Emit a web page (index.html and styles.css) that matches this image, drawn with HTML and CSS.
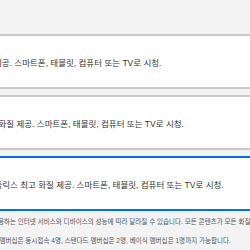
FILE: index.html
```html
<!DOCTYPE html>
<html lang="ko">
<head>
  <meta charset="UTF-8" />
  <meta name="viewport" content="width=device-width, initial-scale=1.0"/>
  <title>멤버십 선택</title>
  <link rel="stylesheet" href="styles.css">
</head>
<body>
  <main class="plan-form">
    <div class="plan-list">
      <label class="plan">
        <span class="plan-desc">좋은 화질 제공. 스마트폰, 태블릿, 컴퓨터 또는 TV로 시청.</span>
      </label>
      <label class="plan">
        <span class="plan-desc">최대 풀HD 화질 제공. 스마트폰, 태블릿, 컴퓨터 또는 TV로 시청.</span>
      </label>
      <label class="plan selected">
        <span class="plan-desc">UHD와 넷플릭스 최고 화질 제공. 스마트폰, 태블릿, 컴퓨터 또는 TV로 시청.</span>
      </label>
    </div>

    <p class="note">UHD 화질은 사용하는 인터넷 서비스와 디바이스의 성능에 따라 달라질 수 있습니다. 모든 콘텐츠가 모든 화질로 제공되지는 않습니다.</p>
    <p class="note">참고 : 프리미엄 멤버십은 동시접속 4명, 스탠다드 멤버십은 2명, 베이식 멤버십은 1명까지 가능합니다.</p>
  </main>
</body>
</html>
```

FILE: styles.css
```css
:root {
  --bg: #f3f3f3;
  --card: #fff;
  --border: #c9c9c9;
  --blue: #0071eb;
  --text: #333;
  --muted: #555;
}

* {
  margin: 0;
  padding: 0;
  box-sizing: border-box;
}

html, body {
  height: 100%;
}

body {
  font-family: "Liberation Sans", "Noto Sans CJK KR", sans-serif;
  background: var(--bg);
  color: var(--text);
  overflow: hidden;
}

/* the form is wider than the window, only its middle shows */
.plan-form {
  width: 560px;
  margin-left: -60px;
  padding-top: 34px;
}

.plan-list {
  display: flex;
  flex-direction: column;
  gap: 6px;
}

.plan {
  display: flex;
  align-items: center;
  height: 55px;
  padding-left: 16px;
  padding-top: 2px;
  background: var(--card);
  border: 2px solid var(--border);
}

.plan.selected {
  border-color: var(--blue);
}

.plan-desc {
  font-size: 8.5px;
  line-height: 10px;
  white-space: nowrap;
}

.note {
  padding-left: 16px;
  font-size: 6.55px;
  line-height: 9px;
  color: var(--muted);
  white-space: nowrap;
  margin-top: 6px;
}

.note + .note {
  margin-top: 10px;
}
```
